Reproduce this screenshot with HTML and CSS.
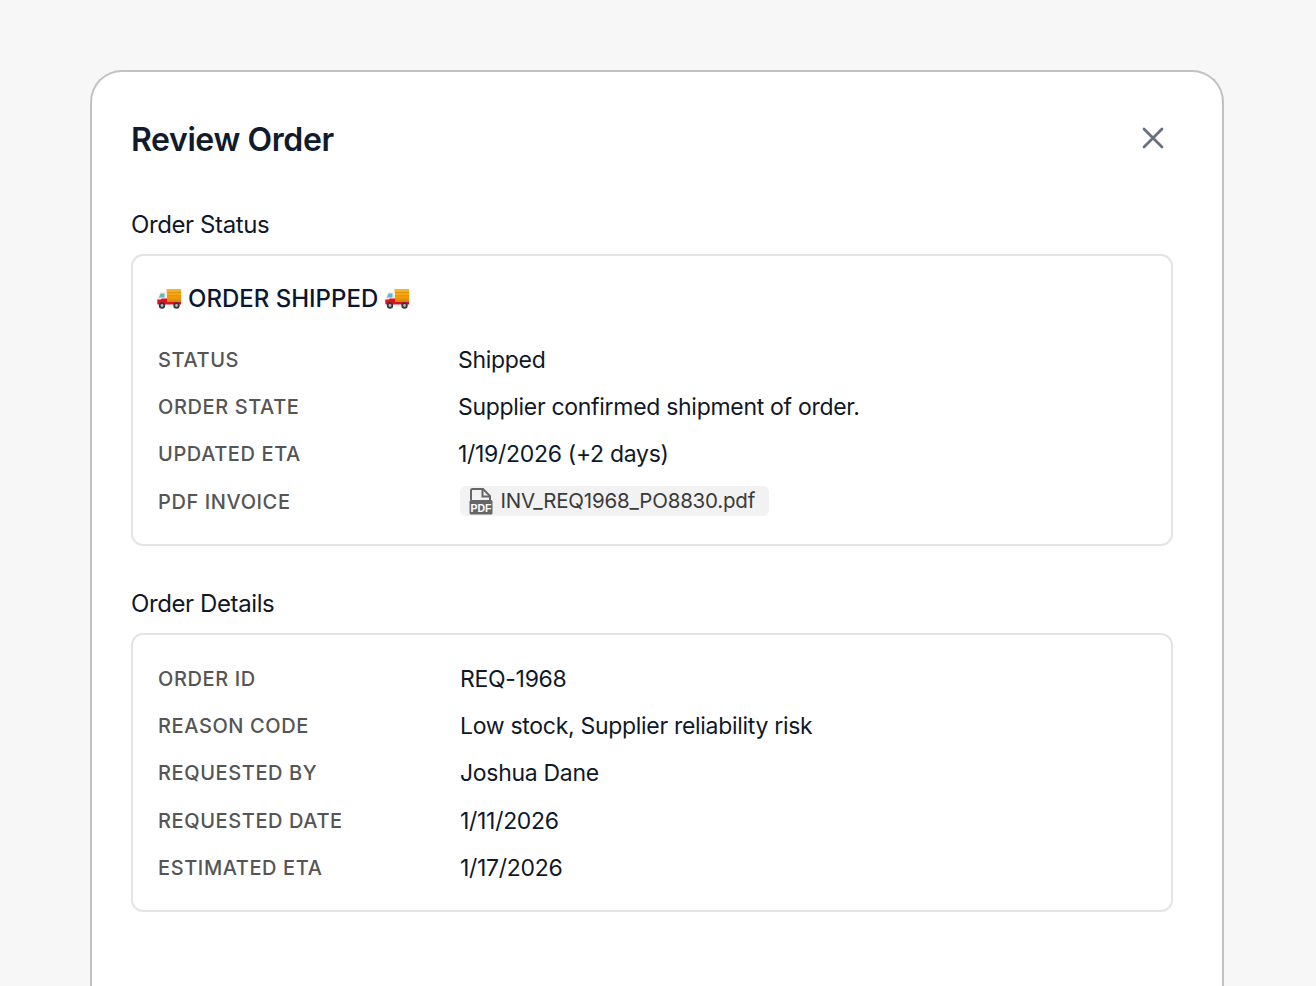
FILE: index.html
```html
<!DOCTYPE html>
<html lang="en">
<head>
  <meta charset="UTF-8">
  <title>Review Order</title>
  <meta name="viewport" content="width=device-width, initial-scale=1.0">
  <link rel="stylesheet" href="styles.css">
</head>
<body>
  <svg class="defs" width="0" height="0">
    <defs>
      <linearGradient id="cargo" x1="0" y1="0" x2="0" y2="1">
        <stop offset="0" stop-color="#f3b53a"/>
        <stop offset="0.6" stop-color="#f59e00"/>
        <stop offset="1" stop-color="#c9801a"/>
      </linearGradient>
      <!-- Delivery truck emoji -->
      <symbol id="truck" viewBox="0 0 24 20">
        <path d="M9.500 0H24v13.500H9.500z" fill="url(#cargo)"/>
        <path d="M9.500 3h14.500v.8H9.500zM9.500 6.500h14.500v.8H9.500z" fill="#e08a00"/>
        <path d="M10 3H4.800C3.700 3 3 3.500 2.500 4.500L.8 8.500C.4 9.300.3 10 .3 11v1.500h9.700z" fill="#f1eeea"/>
        <path d="M3.600 4.600H7.500v4H1.900z" fill="#66b4c4"/>
        <path d="M.3 10.500h3.500l1-1h5.200v3.500h14v2.500H1.500c-.8 0-1.200-.4-1.200-1.200z" fill="#d9141e"/>
        <circle cx="5" cy="16.500" r="3.200" fill="#38383c"/>
        <circle cx="5" cy="16.500" r="1.400" fill="#b8b8ba"/>
        <circle cx="19.500" cy="16.500" r="3.200" fill="#38383c"/>
        <circle cx="19.500" cy="16.500" r="1.400" fill="#b8b8ba"/>
      </symbol>
    </defs>
  </svg>

  <div class="modal">
    <div class="modal-header">
      <h1 class="modal-title">Review Order</h1>
      <svg class="close-icon" viewBox="0 0 24 24" fill="none">
        <path d="M3 3l18 18M21 3L3 21" stroke="#667085" stroke-width="2.800" stroke-linecap="round"/>
      </svg>
    </div>

    <h2 class="section-title">Order Status</h2>
    <div class="panel panel-status">
      <div class="banner">
        <svg class="truck"><use href="#truck"/></svg>
        <span class="banner-text">ORDER SHIPPED</span>
        <svg class="truck"><use href="#truck"/></svg>
      </div>
      <div class="rows rows-status">
        <div class="label">STATUS</div>
        <div class="value">Shipped</div>
        <div class="label">ORDER STATE</div>
        <div class="value">Supplier confirmed shipment of order.</div>
        <div class="label">UPDATED ETA</div>
        <div class="value">1/19/2026 (+2 days)</div>
        <div class="label">PDF INVOICE</div>
        <div class="value">
          <div class="file-chip">
            <svg class="pdf-icon" viewBox="0 0 24 28">
              <path d="M2.500 13V3.500c0-.8.6-1.400 1.400-1.400h10.600l7 7V13" fill="none" stroke="#666" stroke-width="2"/>
              <path d="M14 2.500v7h7.500" fill="none" stroke="#666" stroke-width="2"/>
              <rect x="1" y="13" width="23" height="14.500" rx="1.500" fill="#666"/>
              <text class="pdf-text" x="12.500" y="24.500" text-anchor="middle">PDF</text>
            </svg>
            <span>INV_REQ1968_PO8830.pdf</span>
          </div>
        </div>
      </div>
    </div>

    <h2 class="section-title section-title-next">Order Details</h2>
    <div class="panel panel-details">
      <div class="rows rows-details">
        <div class="label">ORDER ID</div>
        <div class="value">REQ-1968</div>
        <div class="label">REASON CODE</div>
        <div class="value">Low stock, Supplier reliability risk</div>
        <div class="label">REQUESTED BY</div>
        <div class="value">Joshua Dane</div>
        <div class="label">REQUESTED DATE</div>
        <div class="value">1/11/2026</div>
        <div class="label">ESTIMATED ETA</div>
        <div class="value">1/17/2026</div>
      </div>
    </div>
  </div>
</body>
</html>
```

FILE: styles.css
```css
html, body {
  height: 100%;
  overflow: hidden;
}

body {
  margin: 0;
  background: #f7f7f7;
  color: #101828;
  font-family: Inter, 'Liberation Sans', sans-serif;
  box-sizing: border-box;
  padding: 70px 92px 0 90px;
}

.defs {
  display: block;
  height: 0;
}

.modal {
  background: #fff;
  border: 2px solid #c2c2c2;
  border-bottom: 0;
  border-radius: 32px 32px 0 0;
  padding: 31px 49px 0 39px;
  height: 960px;
  box-sizing: border-box;
}

.modal-header {
  display: flex;
  justify-content: space-between;
  align-items: center;
  height: 74px;
}

.modal-title {
  margin: 0;
  font-size: 32px;
  font-weight: 600;
  letter-spacing: -0.4px;
  line-height: 74px;
  color: #111b2e;
}

.close-icon {
  width: 24px;
  height: 24px;
  margin: 0 8px 5px 0;
}

.section-title {
  margin: 0 0 14px;
  padding-top: 33px;
  font-size: 24px;
  font-weight: 400;
  letter-spacing: -0.4px;
  line-height: 30px;
}

.section-title-next {
  padding-top: 43px;
}

.panel {
  border: 2px solid #e4e4e2;
  border-radius: 12px;
  padding: 0 25px;
}

.panel-status {
  height: 292px;
  box-sizing: border-box;
  padding-top: 27px;
}

.panel-details {
  height: 279px;
  box-sizing: border-box;
  padding-top: 20px;
}

.banner {
  display: flex;
  align-items: center;
  gap: 6px;
  margin-left: -1px;
  font-size: 24px;
  font-weight: 500;
  line-height: 32px;
  color: #0a1733;
  margin-bottom: 21px;
}

.banner-text {
  margin: 0 1px;
}

.truck {
  width: 24px;
  height: 20px;
}

.rows {
  display: grid;
  grid-auto-rows: 47.400px;
  align-items: center;
}

.rows-status {
  grid-template-columns: 300px 1fr;
}

.rows-details {
  grid-template-columns: 302px 1fr;
}

.label {
  font-size: 20px;
  font-weight: 500;
  letter-spacing: 0.6px;
  color: #555;
}

.value {
  font-size: 23px;
  font-weight: 400;
  letter-spacing: -0.3px;
  color: #101828;
}

.file-chip {
  display: flex;
  align-items: center;
  gap: 8px;
  width: fit-content;
  height: 30px;
  margin: -2px 0 0 1.500px;
  padding: 0 14px 0 8px;
  background: #f2f2f2;
  border-radius: 6px;
  font-size: 20.500px;
  letter-spacing: -0.2px;
  color: #3a3a3a;
}

.pdf-icon {
  width: 25px;
  height: 28px;
}

.pdf-text {
  font-family: 'Liberation Sans', sans-serif;
  font-size: 10.500px;
  font-weight: 700;
  letter-spacing: 0;
  fill: #fff;
}
```
